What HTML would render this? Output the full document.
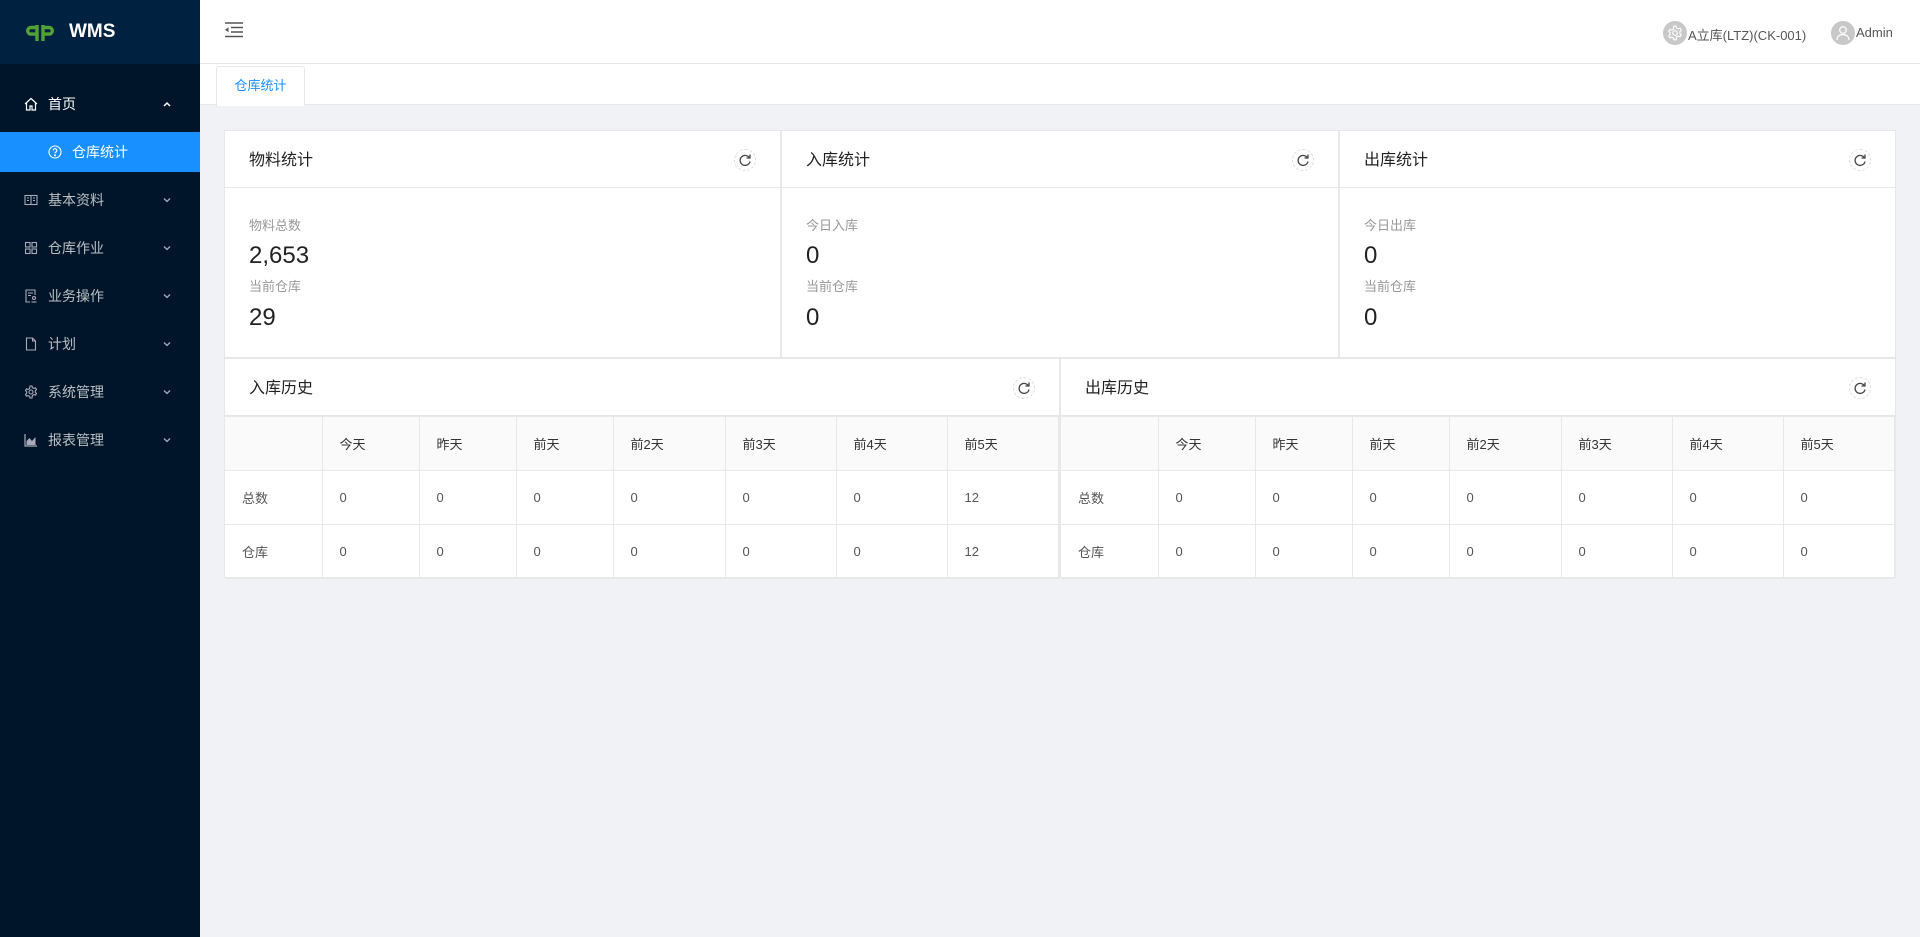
<!DOCTYPE html>
<html><head><meta charset="utf-8"><style>
*{margin:0;padding:0;box-sizing:border-box}
body{width:1920px;height:937px;overflow:hidden;background:#f0f2f5;font-family:"Liberation Sans","Noto Sans CJK SC",sans-serif;font-size:14px;color:#333;position:relative}
.side{position:absolute;left:0;top:0;width:200px;height:937px;background:#001529}
.logo{height:64px;background:#002140;display:flex;align-items:center;padding-left:24px}
.logo b{color:#fff;font-size:19px;margin-left:13px;font-weight:bold;letter-spacing:0}
.mi{position:absolute;left:0;width:200px;height:40px;display:flex;align-items:center;padding-left:24px;color:rgba(255,255,255,.72);font-size:14px}
.mi svg{margin-right:10px}
.mi .ar{position:absolute;right:18px;top:15px}
.act{background:#1890ff;color:#fff;padding-left:48px}
.top{position:absolute;left:200px;top:0;right:0;height:64px;background:#fff;border-bottom:1px solid #e4e7ed}
.tabs{position:absolute;left:200px;top:64px;right:0;height:41px;background:#fff;border-bottom:1px solid #e4e7ed}
.tab{position:absolute;left:16px;top:2px;width:89px;height:40px;border:1px solid #e8e8e8;border-bottom:none;border-radius:3px 3px 0 0;background:#fff;color:#1890ff;font-size:13px;text-align:center;line-height:38px}
.card{position:absolute;background:#fff;border:1px solid #e8e8e8}
.ch{height:57px;border-bottom:1px solid #e8e8e8;padding-left:24px;line-height:60px;font-size:16px;color:#222;position:relative}
.rf{position:absolute;right:24px;top:18px;width:22px;height:22px;border:1px dashed #ddd;border-radius:50%}
.rf svg{position:absolute;left:3px;top:3px}
.lb{position:absolute;left:24px;font-size:13px;color:#999}
.nm{position:absolute;left:24px;font-size:24px;color:#222}
table{border-collapse:collapse;width:100%;font-size:13px}
td,th{border:1px solid #e8e8e8;height:54px;text-align:left;padding-left:17px;font-weight:normal;color:#555}
th{background:#fafafa;color:#333}
tr td:first-child,tr th:first-child{border-left:none}
</style></head><body>
<div class="side">
 <div class="logo"><svg width="32" height="18" viewBox="0 0 32 18" fill="none" stroke="#52a336" stroke-width="3.4"><path d="M13 4.5H7a3.3 3.3 0 0 0 0 6.6h6M13 2v16M19 18V2M19 4.5h6a3.3 3.3 0 0 1 0 6.6h-6"/></svg><b>WMS</b></div>
 <div class="mi" style="top:84px;color:#fff"><svg width="14" height="14" viewBox="0 0 14 14" fill="none" stroke="#fff" stroke-width="1.2"><path d="M1 7L7 1.5 13 7M2.5 5.8V13h3.5V9h2v4h3.5V5.8"/></svg>首页<svg class="ar" width="10" height="10" viewBox="0 0 10 10"><path d="M2 7l3-3 3 3" stroke="#fff" stroke-width="1.5" fill="none"/></svg></div>
 <div class="mi act" style="top:132px"><svg width="14" height="14" viewBox="0 0 14 14" fill="none" stroke="#fff" stroke-width="1.1"><circle cx="7" cy="7" r="6"/><path d="M5.2 5.5a1.8 1.8 0 1 1 2.4 1.7c-.5.2-.6.6-.6 1.2"/><circle cx="7" cy="10.3" r=".5" fill="#fff"/></svg>仓库统计</div>
 <div class="mi" style="top:180px"><svg width="14" height="14" viewBox="0 0 14 14" fill="none" stroke="#aab" stroke-width="1.1"><rect x="1" y="2.5" width="12" height="9"/><path d="M7 2.5v9M3 5h2M3 7.5h2M9 5h2M9 7.5h2"/></svg>基本资料<svg class="ar" width="10" height="10" viewBox="0 0 10 10"><path d="M2 3.5l3 3 3-3" stroke="#aab" stroke-width="1.3" fill="none"/></svg></div>
 <div class="mi" style="top:228px"><svg width="14" height="14" viewBox="0 0 14 14" fill="none" stroke="#aab" stroke-width="1.1"><rect x="1.5" y="1.5" width="4.5" height="4.5"/><rect x="8" y="1.5" width="4.5" height="4.5"/><rect x="1.5" y="8" width="4.5" height="4.5"/><rect x="8" y="8" width="4.5" height="4.5"/></svg>仓库作业<svg class="ar" width="10" height="10" viewBox="0 0 10 10"><path d="M2 3.5l3 3 3-3" stroke="#aab" stroke-width="1.3" fill="none"/></svg></div>
 <div class="mi" style="top:276px"><svg width="14" height="14" viewBox="0 0 14 14" fill="none" stroke="#aab" stroke-width="1.1"><path d="M6 13H2V1h9v5M4 4h5M4 6.5h3"/><circle cx="10" cy="9" r="1.5"/><path d="M7.5 13h5"/></svg>业务操作<svg class="ar" width="10" height="10" viewBox="0 0 10 10"><path d="M2 3.5l3 3 3-3" stroke="#aab" stroke-width="1.3" fill="none"/></svg></div>
 <div class="mi" style="top:324px"><svg width="14" height="14" viewBox="0 0 14 14" fill="none" stroke="#aab" stroke-width="1.1"><path d="M2.5 1h6l3 3v9h-9zM8.5 1v3h3"/></svg>计划<svg class="ar" width="10" height="10" viewBox="0 0 10 10"><path d="M2 3.5l3 3 3-3" stroke="#aab" stroke-width="1.3" fill="none"/></svg></div>
 <div class="mi" style="top:372px"><svg width="14" height="14" viewBox="0 0 14 14" fill="none" stroke="#aab" stroke-width="1.1"><circle cx="7" cy="7" r="2"/><path d="M6 1h2l.4 1.6 1.5.8 1.6-.6 1 1.7-1.2 1.2v1.6l1.2 1.2-1 1.7-1.6-.6-1.5.8L8 13H6l-.4-1.6-1.5-.8-1.6.6-1-1.7 1.2-1.2V6.7L1.5 5.5l1-1.7 1.6.6 1.5-.8z"/></svg>系统管理<svg class="ar" width="10" height="10" viewBox="0 0 10 10"><path d="M2 3.5l3 3 3-3" stroke="#aab" stroke-width="1.3" fill="none"/></svg></div>
 <div class="mi" style="top:420px"><svg width="14" height="14" viewBox="0 0 14 14"><path d="M1 1v12h12" stroke="#aab" stroke-width="1.2" fill="none"/><path d="M2.5 12V8l3-3 2.5 3 3.5-4v8z" fill="#aab"/></svg>报表管理<svg class="ar" width="10" height="10" viewBox="0 0 10 10"><path d="M2 3.5l3 3 3-3" stroke="#aab" stroke-width="1.3" fill="none"/></svg></div>
</div>
<div class="top">
 <svg style="position:absolute;left:25px;top:22px" width="18" height="16" viewBox="0 0 18 16"><path d="M0 1h18M6 5.5h12M6 10h12M0 14.5h18" stroke="#555" stroke-width="1.6"/><path d="M0 7.8l3.5-2.5v5z" fill="#555"/></svg>
 <div style="position:absolute;left:1463px;top:21px;width:24px;height:24px;border-radius:50%;background:#c8c8c8"><svg style="position:absolute;left:4px;top:4px" width="16" height="16" viewBox="0 0 14 14" fill="none" stroke="#fff" stroke-width="1"><circle cx="7" cy="7" r="2"/><path d="M6 1h2l.4 1.6 1.5.8 1.6-.6 1 1.7-1.2 1.2v1.6l1.2 1.2-1 1.7-1.6-.6-1.5.8L8 13H6l-.4-1.6-1.5-.8-1.6.6-1-1.7 1.2-1.2V6.7L1.5 5.5l1-1.7 1.6.6 1.5-.8z"/></svg></div>
 <div style="position:absolute;left:1488px;top:25px;font-size:13px;color:#555">A立库(LTZ)(CK-001)</div>
 <div style="position:absolute;left:1631px;top:21px;width:24px;height:24px;border-radius:50%;background:#c8c8c8"><svg style="position:absolute;left:5px;top:4px" width="14" height="16" viewBox="0 0 14 16" fill="none" stroke="#fff" stroke-width="1.2"><circle cx="7" cy="5" r="3.3"/><path d="M1 15c0-3.5 2.7-5.5 6-5.5s6 2 6 5.5"/></svg></div>
 <div style="position:absolute;left:1656px;top:25px;font-size:13px;color:#555">Admin</div>
</div>
<div class="tabs"><div class="tab">仓库统计</div></div>

<div class="card" style="left:224px;top:130px;width:557px;height:228px"><div class="ch">物料统计<div class="rf"><svg width="14" height="14" viewBox="0 0 14 14" fill="none" stroke="#444" stroke-width="1.3"><path d="M11.5 5A5 5 0 1 0 12 8.5M12 1.5v3.5H8.5"/></svg></div></div>
<div class="lb" style="top:84px">物料总数</div><div class="nm" style="top:111px">2,653</div><div class="lb" style="top:145px">当前仓库</div><div class="nm" style="top:173px">29</div></div>
<div class="card" style="left:781px;top:130px;width:558px;height:228px"><div class="ch">入库统计<div class="rf"><svg width="14" height="14" viewBox="0 0 14 14" fill="none" stroke="#444" stroke-width="1.3"><path d="M11.5 5A5 5 0 1 0 12 8.5M12 1.5v3.5H8.5"/></svg></div></div>
<div class="lb" style="top:84px">今日入库</div><div class="nm" style="top:111px">0</div><div class="lb" style="top:145px">当前仓库</div><div class="nm" style="top:173px">0</div></div>
<div class="card" style="left:1339px;top:130px;width:557px;height:228px"><div class="ch">出库统计<div class="rf"><svg width="14" height="14" viewBox="0 0 14 14" fill="none" stroke="#444" stroke-width="1.3"><path d="M11.5 5A5 5 0 1 0 12 8.5M12 1.5v3.5H8.5"/></svg></div></div>
<div class="lb" style="top:84px">今日出库</div><div class="nm" style="top:111px">0</div><div class="lb" style="top:145px">当前仓库</div><div class="nm" style="top:173px">0</div></div>

<div class="card" style="left:224px;top:358px;width:836px;height:220px"><div class="ch">入库历史<div class="rf"><svg width="14" height="14" viewBox="0 0 14 14" fill="none" stroke="#444" stroke-width="1.3"><path d="M11.5 5A5 5 0 1 0 12 8.5M12 1.5v3.5H8.5"/></svg></div></div>
<table><colgroup><col width="97"><col width="97"><col width="97"><col width="97"><col width="112"><col width="111"><col width="111"><col></colgroup>
<tr><th></th><th>今天</th><th>昨天</th><th>前天</th><th>前2天</th><th>前3天</th><th>前4天</th><th>前5天</th></tr>
<tr><td>总数</td><td>0</td><td>0</td><td>0</td><td>0</td><td>0</td><td>0</td><td>12</td></tr>
<tr><td>仓库</td><td>0</td><td>0</td><td>0</td><td>0</td><td>0</td><td>0</td><td>12</td></tr></table></div>
<div class="card" style="left:1060px;top:358px;width:836px;height:220px"><div class="ch">出库历史<div class="rf"><svg width="14" height="14" viewBox="0 0 14 14" fill="none" stroke="#444" stroke-width="1.3"><path d="M11.5 5A5 5 0 1 0 12 8.5M12 1.5v3.5H8.5"/></svg></div></div>
<table><colgroup><col width="97"><col width="97"><col width="97"><col width="97"><col width="112"><col width="111"><col width="111"><col></colgroup>
<tr><th></th><th>今天</th><th>昨天</th><th>前天</th><th>前2天</th><th>前3天</th><th>前4天</th><th>前5天</th></tr>
<tr><td>总数</td><td>0</td><td>0</td><td>0</td><td>0</td><td>0</td><td>0</td><td>0</td></tr>
<tr><td>仓库</td><td>0</td><td>0</td><td>0</td><td>0</td><td>0</td><td>0</td><td>0</td></tr></table></div>
</body></html>
